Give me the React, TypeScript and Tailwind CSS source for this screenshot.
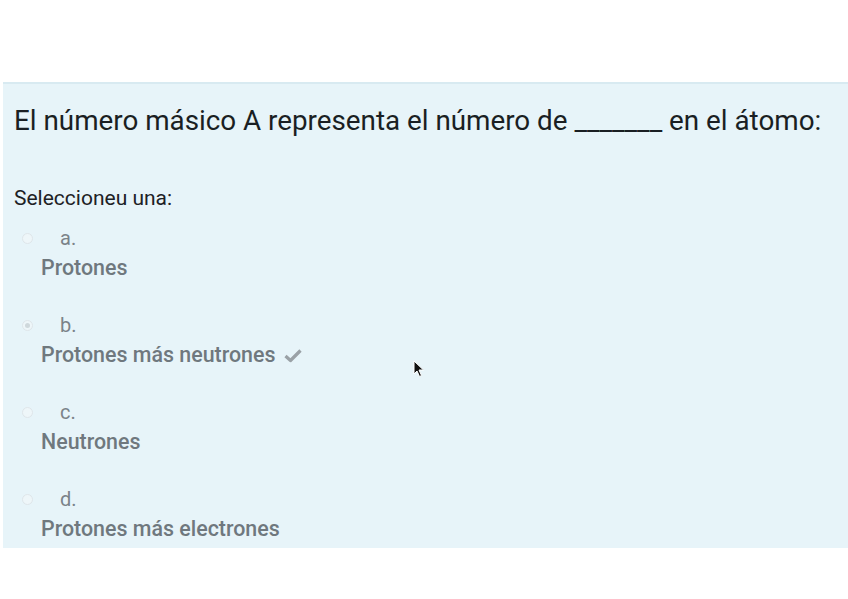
import React from 'react';

const options = [
  { letter: 'a.', text: 'Protones', checked: false, correct: false },
  { letter: 'b.', text: 'Protones más neutrones', checked: true, correct: true },
  { letter: 'c.', text: 'Neutrones', checked: false, correct: false },
  { letter: 'd.', text: 'Protones más electrones', checked: false, correct: false },
];

const Radio: React.FC<{ checked: boolean }> = ({ checked }) => (
  <span className="w-[11px] h-[11px] rounded-full border border-[#dfe6ea] bg-[#eef6f9] flex items-center justify-center">
    {checked && <span className="w-[5px] h-[5px] rounded-full bg-[#cfd8dc]" />}
  </span>
);

export default function App() {
  return (
    <div className="relative w-[848px] h-[599px] bg-white font-['Roboto',sans-serif] overflow-hidden">
      <div className="h-[82px]" />
      <div className="ml-[3px] h-[466px] bg-[#e7f4f9] border-t-2 border-[#d8eaf1] pl-[11px]">
        <h2 className="pt-[20px] text-[27.8px] leading-[34px] text-[#1a1f23]">
          El número másico A representa el número de _______ en el átomo:
        </h2>
        <p className="mt-[48px] text-[21px] leading-[24px] text-[#1d2125]">Seleccioneu una:</p>
        <div className="mt-[16px] flex flex-col">
          {options.map((o) => (
            <div key={o.letter} className="h-[87px]">
              <div className="flex items-center h-[24px]">
                <span className="ml-[8px] w-[11px]">
                  <Radio checked={o.checked} />
                </span>
                <span className="ml-[27px] text-[20px] text-[#7b8389]">{o.letter}</span>
              </div>
              <div className="mt-[6px] ml-[27px] flex items-center h-[24px] text-[21.4px] text-[#6f787e] font-medium">
                {o.text}
                {o.correct && (
                  <svg className="ml-[9px]" width="18" height="15" viewBox="0 0 18 15">
                    <path d="M1.5 8 L6.5 12.5 L16.5 2.5" fill="none" stroke="#9aa1a6" strokeWidth="3.2" strokeLinejoin="round" />
                  </svg>
                )}
              </div>
            </div>
          ))}
        </div>
      </div>
      <svg className="absolute left-[413px] top-[360px]" width="12" height="18" viewBox="0 0 12 18">
        <path d="M1 1 L1 14 L4 11 L6.5 16.5 L8.5 15.5 L6 10 L10.5 10 Z" fill="#111" stroke="#fff" strokeWidth="1" />
      </svg>
    </div>
  );
}
